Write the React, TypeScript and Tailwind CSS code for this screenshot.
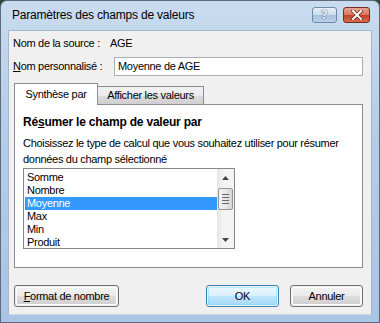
import React from "react";

const font = { fontFamily: '"Liberation Sans", Arial, sans-serif' };

function Btn({ children, w, def }: { children: React.ReactNode; w: string; def?: boolean }) {
  return (
    <div
      className={`${w} h-[22px] rounded-[3px] border ${def ? "border-[#3c7fb1]" : "border-[#707070]"} p-[1px]`}
    >
      <div
        className={`w-full h-full rounded-[2px] flex items-center justify-center text-[11px] tracking-[-0.3px] text-black whitespace-nowrap ${
          def
            ? "bg-[linear-gradient(#eaf6fd_0%,#d9f0fc_50%,#bee6fd_51%,#a7d9f5_100%)] shadow-[inset_0_0_0_1px_#48d8fb55]"
            : "bg-[linear-gradient(#f2f2f2_0%,#ebebeb_50%,#dddddd_51%,#cfcfcf_100%)] shadow-[inset_0_0_0_1px_#fcfcfc]"
        }`}
      >
        {children}
      </div>
    </div>
  );
}

const items = ["Somme", "Nombre", "Moyenne", "Max", "Min", "Produit"];

export default function App() {
  return (
    <div
      className="w-[380px] h-[323px] bg-[#2f4a3a] text-black select-none whitespace-nowrap"
      style={font}
    >
      <div className="w-full h-full rounded-t-[7px] border border-[#5d6b7c] bg-[linear-gradient(180deg,#c9dcef_0%,#b5cde7_40%,#a9c5e4_100%)] flex flex-col">
        {/* Title bar */}
        <div className="h-[29px] flex items-start pt-[6px] pl-[11px] pr-[9px]">
          <div className="text-[12px] tracking-[-0.2px] text-black leading-[16px]">Paramètres des champs de valeurs</div>
          <div className="flex-1" />
          <div className="flex gap-[6px]">
            <div className="w-[25px] h-[16px] rounded-[3px] border border-[#6d8aa8] bg-[linear-gradient(#e6eff8_0%,#cbdcee_50%,#a8c1dd_51%,#b9d1ea_100%)] flex items-center justify-center">
              <span className="text-[12px] font-bold leading-none text-[#e8eef5] [text-shadow:0_0_1px_#3d5570,0_0_1px_#3d5570]" style={{ fontFamily: '"DejaVu Sans", sans-serif' }}>?</span>
            </div>
            <div className="w-[27px] h-[16px] rounded-[3px] border border-[#7a2a22] bg-[linear-gradient(#e5a593_0%,#d8735e_50%,#c2422a_51%,#d56b50_100%)] flex items-center justify-center">
              <svg width="12" height="10" viewBox="0 0 12 10">
                <path d="M2 1 L10 9 M10 1 L2 9" stroke="#5a1a10" strokeWidth="3.2" strokeLinecap="square" />
                <path d="M2 1 L10 9 M10 1 L2 9" stroke="#ffffff" strokeWidth="2" strokeLinecap="square" />
              </svg>
            </div>
          </div>
        </div>
        {/* Client */}
        <div className="mx-[7px] h-[285px] bg-[#f0f0f0] border border-[#a4b6cb] border-b-[#c7d6e6] flex flex-col pl-[4px] pr-[8px] text-[11px] tracking-[-0.3px]">
          <div className="flex h-[16px] mt-[4px] items-center">
            <div className="w-[97px]">Nom de la source :</div>
            <div>AGE</div>
          </div>
          <div className="flex h-[19px] mt-[6px] items-center">
            <div className="w-[101px]">
              <span className="underline">N</span>om personnalisé :
            </div>
            <div className="flex-1 h-[19px] bg-white border border-[#abadb3] flex items-center pl-[3px]">
              Moyenne de AGE
            </div>
          </div>
          {/* Tabs */}
          <div className="flex items-end h-[21px] mt-[7px] pl-[1px]">
            <div className="relative z-10 w-[84px] h-[22px] bg-white border border-[#898c95] border-b-0 flex items-center justify-center -mb-[1px] pb-[1px]">
              Synthèse par
            </div>
            <div className="w-[106px] h-[18px] bg-[linear-gradient(#f2f2f2_0%,#ebebeb_50%,#dddddd_51%,#cfcfcf_100%)] border border-[#898c95] border-l-0 border-b-0 flex items-center justify-center">
              Afficher les valeurs
            </div>
          </div>
          <div className="ml-[1px] h-[164px] bg-white border border-[#898c95] pl-[8px] pt-[9px]">
            <div className="font-bold text-[12px] tracking-[-0.2px] leading-[16px]">
              Ré<span className="underline">s</span>umer le champ de valeur par
            </div>
            <div className="mt-[5px] leading-[16px]">
              Choisissez le type de calcul que vous souhaitez utiliser pour résumer
              <br />
              données du champ sélectionné
            </div>
            <div className="mt-[1px] w-[212px] h-[81px] border border-[#828790] flex overflow-hidden">
              <div className="flex-1 pt-[2px] pl-[1px] overflow-hidden">
                {items.map((it) => (
                  <div
                    key={it}
                    className={`h-[13px] leading-[13px] pl-[2px] ${it === "Moyenne" ? "bg-[#3399ff] text-white" : ""}`}
                  >
                    {it}
                  </div>
                ))}
              </div>
              <div className="w-[17px] bg-[linear-gradient(90deg,#e6e6e6,#f4f4f4_40%,#f4f4f4)] flex flex-col items-center">
                <div className="h-[17px] w-full flex items-center justify-center">
                  <svg width="7" height="4" viewBox="0 0 7 4"><path d="M0 4 L3.5 0 L7 4 Z" fill="#444" /></svg>
                </div>
                <div className="mt-[2px] w-[15px] h-[22px] rounded-[2px] border border-[#959595] bg-[linear-gradient(90deg,#f3f3f3,#e8e8e8_50%,#d6d6d6)] flex flex-col items-center justify-center gap-[2px]">
                  <div className="w-[7px] h-[1px] bg-[#6a6a6a]" />
                  <div className="w-[7px] h-[1px] bg-[#6a6a6a]" />
                  <div className="w-[7px] h-[1px] bg-[#6a6a6a]" />
                  <div className="w-[7px] h-[1px] bg-[#6a6a6a]" />
                </div>
                <div className="flex-1" />
                <div className="h-[17px] w-full flex items-center justify-center">
                  <svg width="7" height="4" viewBox="0 0 7 4"><path d="M0 0 L3.5 4 L7 0 Z" fill="#444" /></svg>
                </div>
              </div>
            </div>
          </div>
          {/* Buttons */}
          <div className="flex mt-[17px] pl-[1px]">
            <Btn w="w-[105px]">
              <span><span className="underline">F</span>ormat de nombre</span>
            </Btn>
            <div className="flex-1" />
            <Btn w="w-[73px]" def>
              OK
            </Btn>
            <div className="w-[11px]" />
            <Btn w="w-[73px]">Annuler</Btn>
          </div>
        </div>
      </div>
    </div>
  );
}
